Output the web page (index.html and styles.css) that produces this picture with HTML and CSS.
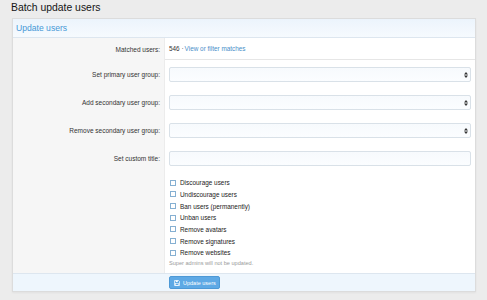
FILE: index.html
```
<html>
<head>
    <link rel="stylesheet" href="styles.css">
</head>
<body>
    <h1 class="page-title">Batch update users</h1>
    <div class="block">
        <h2 class="block-header">Update users</h2>
        <div class="form-row first">
            <div class="label-cell">Matched users:</div>
            <div class="value-cell">546 · <a href="#">View or filter matches</a></div>
        </div>
        <div class="form-row">
            <div class="label-cell">Set primary user group:</div>
            <div class="value-cell">
                <div class="select-wrap">
                    <select class="input"><option></option></select>
                    <svg class="arrows" width="4" height="6" viewBox="0 0 4 6"><path d="M0 2.4L2 0L4 2.4Z M0 3.6L2 6L4 3.6Z" fill="#333"/></svg>
                </div>
            </div>
        </div>
        <div class="form-row">
            <div class="label-cell">Add secondary user group:</div>
            <div class="value-cell">
                <div class="select-wrap">
                    <select class="input"><option></option></select>
                    <svg class="arrows" width="4" height="6" viewBox="0 0 4 6"><path d="M0 2.4L2 0L4 2.4Z M0 3.6L2 6L4 3.6Z" fill="#333"/></svg>
                </div>
            </div>
        </div>
        <div class="form-row">
            <div class="label-cell">Remove secondary user group:</div>
            <div class="value-cell">
                <div class="select-wrap">
                    <select class="input"><option></option></select>
                    <svg class="arrows" width="4" height="6" viewBox="0 0 4 6"><path d="M0 2.4L2 0L4 2.4Z M0 3.6L2 6L4 3.6Z" fill="#333"/></svg>
                </div>
            </div>
        </div>
        <div class="form-row">
            <div class="label-cell">Set custom title:</div>
            <div class="value-cell">
                <input class="input" type="text">
            </div>
        </div>
        <div class="form-row checks-row">
            <div class="label-cell"></div>
            <div class="value-cell">
                <ul class="checks">
                    <li><label><input type="checkbox"> Discourage users</label></li>
                    <li><label><input type="checkbox"> Undiscourage users</label></li>
                    <li><label><input type="checkbox"> Ban users (permanently)</label></li>
                    <li><label><input type="checkbox"> Unban users</label></li>
                    <li><label><input type="checkbox"> Remove avatars</label></li>
                    <li><label><input type="checkbox"> Remove signatures</label></li>
                    <li><label><input type="checkbox"> Remove websites</label></li>
                </ul>
                <p class="hint">Super admins will not be updated.</p>
            </div>
        </div>
        <div class="block-footer">
            <button class="button">
                <svg width="6" height="6" viewBox="0 0 12 12"><path d="M1 1H9L11 3V11H1Z" fill="none" stroke="#fff" stroke-width="1.4"/><rect x="3.5" y="1" width="4" height="3" fill="#fff"/><rect x="3" y="6.5" width="6" height="4.5" fill="none" stroke="#fff" stroke-width="1.2"/></svg>
                Update users
            </button>
        </div>
    </div>
</body>
</html>
```

FILE: styles.css
```
* {
    margin: 0;
    padding: 0;
    box-sizing: border-box;
}
body {
    background-color: #ececec;
    font-family: "Liberation Sans", Arial, sans-serif;
    color: #222;
}
.page-title {
    font-size: 10.4px;
    font-weight: normal;
    line-height: 15px;
    height: 18px;
    padding-left: 11px;
    color: #141414;
}
.block {
    margin: 0 11px 0 12px;
    border: 1px solid #dcdcdc;
    background: #fff;
    box-shadow: 0 1px 2px rgba(0, 0, 0, 0.05);
}
.block-header {
    font-size: 8.6px;
    font-weight: normal;
    color: #4798d6;
    height: 19px;
    line-height: 18px;
    padding-left: 3px;
    background: linear-gradient(#ecf4fc, #f6fafe);
    border-bottom: 1px solid #dde6ef;
}
.form-row {
    display: grid;
    grid-template-columns: 152px 1fr;
    height: 28px;
}
.form-row.first {
    height: 22px;
}
.form-row.first .value-cell {
    border-bottom: 1px solid #e6e6e6;
}
.label-cell {
    background: #f6f6f6;
    border-right: 1px solid #ececec;
    font-size: 6.5px;
    color: #333;
    text-align: right;
    padding-right: 4px;
    display: flex;
    align-items: center;
    justify-content: flex-end;
}
.value-cell {
    padding: 0 4px 0 4px;
    display: flex;
    align-items: center;
    font-size: 6.4px;
    color: #333;
}
.value-cell a {
    color: #4a8fc9;
    text-decoration: none;
    margin-left: 1px;
}
.select-wrap {
    position: relative;
    width: 100%;
}
.input {
    appearance: none;
    -webkit-appearance: none;
    display: block;
    width: 100%;
    height: 15px;
    border: 1px solid #d9e1e8;
    border-radius: 2px;
    background: linear-gradient(#f7fafd, #fbfdff);
    outline: none;
}
.arrows {
    position: absolute;
    right: 3px;
    top: 5px;
}
.checks-row {
    height: auto;
}
.checks-row .value-cell {
    display: block;
    padding-top: 5px;
    padding-bottom: 6px;
}
.checks {
    list-style: none;
}
.checks li {
    height: 11.65px;
    display: flex;
    align-items: center;
    font-size: 6.4px;
    color: #222;
}
.checks label {
    display: flex;
    align-items: center;
    gap: 4px;
}
.checks input {
    appearance: none;
    -webkit-appearance: none;
    width: 6px;
    height: 6px;
    border: 1px solid #86b0d2;
    background: #fff;
    margin-left: 1px;
}
.hint {
    font-size: 5.6px;
    color: #9a9a9a;
    margin-top: 1px;
    height: 8px;
    line-height: 8px;
}
.block-footer {
    border-top: 1px solid #dde6ef;
    background: #eef6fd;
    height: 18px;
    padding-left: 156px;
    display: flex;
    align-items: center;
}
.button {
    height: 13px;
    width: 51px;
    border: 1px solid #4d99d6;
    border-radius: 2px;
    background: #5ea9e5;
    color: #fff;
    font-family: "Liberation Sans", Arial, sans-serif;
    font-size: 5.5px;
    display: flex;
    align-items: center;
    gap: 3px;
    padding-left: 4px;
}
```
